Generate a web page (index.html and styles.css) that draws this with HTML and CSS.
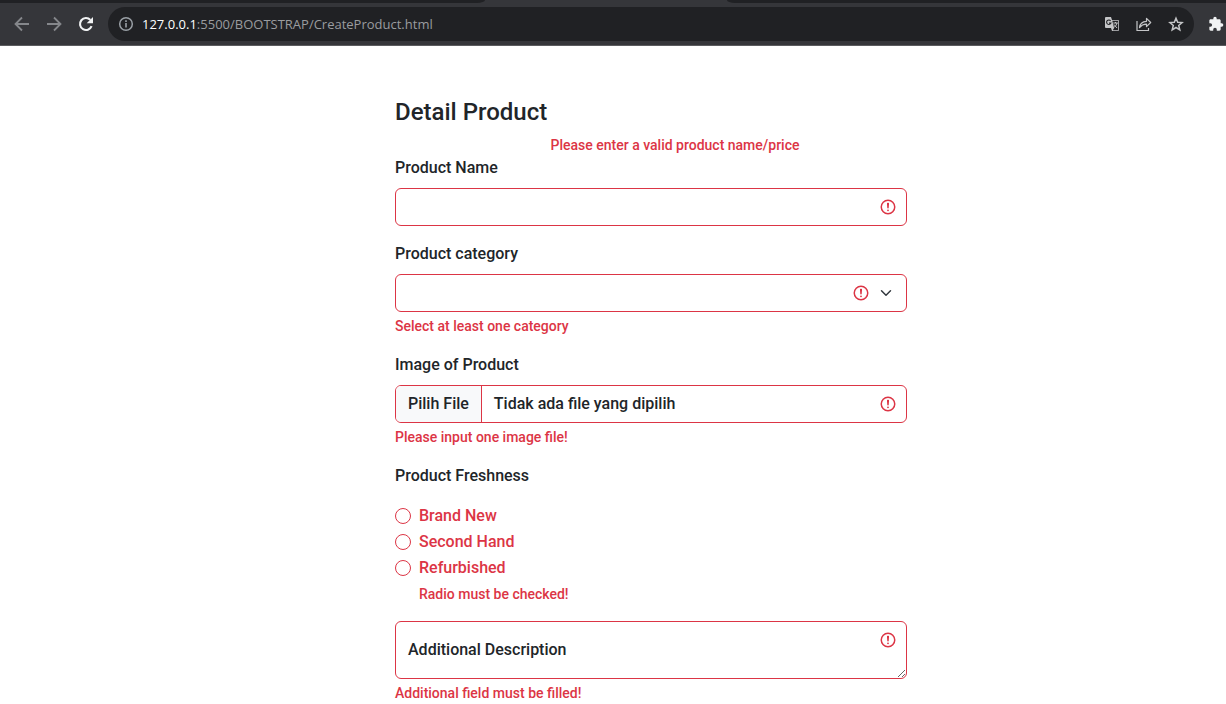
FILE: index.html
```html
<!DOCTYPE html>
<html lang="en">
<head>
<meta charset="utf-8">
<title>Detail Product</title>
<link rel="stylesheet" href="styles.css">
</head>
<body>
<header class="browser">
  <div class="tabstrip"><span class="tabs-left"></span><span class="tab-active"></span><span class="tabs-right"></span></div>
  <nav class="toolbar">
    <button class="tool dim" type="button" aria-label="Back"><svg viewBox="0 0 16 16"><path d="M15 8H2M8 1.5 1.5 8 8 14.5" fill="none" stroke="currentColor" stroke-width="1.8"/></svg></button>
    <button class="tool dim" type="button" aria-label="Forward"><svg viewBox="0 0 16 16"><path d="M1 8h13M8 1.5 14.5 8 8 14.5" fill="none" stroke="currentColor" stroke-width="1.8"/></svg></button>
    <button class="tool" type="button" aria-label="Reload"><svg viewBox="0 0 16 16"><path d="M13.600 10.200A6 6 0 1 1 12.400 3.900" fill="none" stroke="currentColor" stroke-width="2.100"/><path d="M15 1v6.300H8.700z" fill="currentColor"/></svg></button>
    <div class="address">
      <svg class="info" viewBox="0 0 16 16"><circle cx="8" cy="8" r="6.300" fill="none" stroke="currentColor" stroke-width="1.500"/><path d="M8 7v4.500M8 4.300v1.600" stroke="currentColor" stroke-width="1.600"/></svg>
      <span class="url"><span class="host">127.0.0.1</span>:5500/BOOTSTRAP/CreateProduct.html</span>
      <button class="tool pale" type="button" aria-label="Translate"><svg viewBox="0 0 16 16"><path d="M2 1h5l1 3h6q1 0 1 1v9q0 1-1 1H8l-1-3H2q-1 0-1-1V2q0-1 1-1z" fill="currentColor"/><path d="M8.300 4.800H14.200v9.400H8.800l1.300-2.200z" fill="#202124"/><path d="M6.600 4.900A2.200 2.200 0 1 0 6.900 7H5" fill="none" stroke="#202124" stroke-width="1.100"/><path d="M9.300 7h4.500M11.500 6v1M13 7q-.5 2.500-3 4.500M10 8.500l3 3.500" fill="none" stroke="currentColor" stroke-width="1"/></svg></button>
      <button class="tool pale" type="button" aria-label="Share"><svg viewBox="0 0 16 16"><path d="M1 5v9.500h11.500V12" fill="none" stroke="currentColor" stroke-width="1.200"/><path d="M3.500 11.500Q4 5.800 10.500 5.300V2.300l4.200 4.200-4.200 4.200V8.200Q6.500 8 3.500 11.500z" fill="none" stroke="currentColor" stroke-width="1.200" stroke-linejoin="round"/></svg></button>
      <button class="tool pale" type="button" aria-label="Bookmark"><svg viewBox="0 0 16 16"><path d="m8 2.200 1.700 4 4.400.4-3.400 2.900 1.100 4.300L8 11.500l-3.800 2.300 1.100-4.300-3.400-2.900 4.400-.4z" fill="none" stroke="currentColor" stroke-width="1.500"/></svg></button>
    </div>
    <button class="tool extensions" type="button" aria-label="Extensions"><svg viewBox="0 0 24 24"><path d="M20.500 11H19V7c0-1.100-.9-2-2-2h-4V3.500a2.500 2.500 0 0 0-5 0V5H4c-1.100 0-2 .9-2 2v3.800h1.500a2.700 2.700 0 0 1 0 5.400H2V20c0 1.100.9 2 2 2h3.800v-1.500a2.700 2.700 0 0 1 5.400 0V22H17c1.100 0 2-.9 2-2v-4h1.500a2.500 2.500 0 0 0 0-5z" fill="currentColor"/></svg></button>
  </nav>
</header>
<main class="page">
  <form class="product-form" novalidate>
    <h1 class="title">Detail Product</h1>
    <p class="feedback form-error">Please enter a valid product name/price</p>
    <div class="field">
      <label class="label" for="name">Product Name</label>
      <input class="control invalid" id="name" type="text">
    </div>
    <div class="field">
      <label class="label" for="category">Product category</label>
      <select class="control invalid select" id="category"><option value=""></option><option>Food</option><option>Other</option></select>
      <p class="feedback">Select at least one category</p>
    </div>
    <div class="field">
      <label class="label" for="image">Image of Product</label>
      <div class="control invalid file">
        <input class="file-input" id="image" type="file">
        <label class="file-button" for="image">Pilih File</label>
        <span class="file-name">Tidak ada file yang dipilih</span>
      </div>
      <p class="feedback">Please input one image file!</p>
    </div>
    <fieldset class="field group">
      <legend class="label">Product Freshness</legend>
      <div class="choices">
        <label class="choice"><input class="radio" type="radio" name="freshness">Brand New</label>
        <label class="choice"><input class="radio" type="radio" name="freshness">Second Hand</label>
        <label class="choice"><input class="radio" type="radio" name="freshness">Refurbished</label>
      </div>
      <p class="feedback indented">Radio must be checked!</p>
    </fieldset>
    <div class="field">
      <div class="floating">
        <textarea class="control invalid textarea" id="description"></textarea>
        <label class="floating-label" for="description">Additional Description</label>
      </div>
      <p class="feedback">Additional field must be filled!</p>
    </div>
  </form>
</main>
</body>
</html>
```
FILE: styles.css
```css
* { box-sizing: border-box; }
body {
  margin: 0;
  background: #fff;
  color: #212529;
  font: 500 16px/24px Roboto, sans-serif;
}
button, input, select, textarea { font: inherit; color: inherit; }
p, h1 { margin: 0; }

.browser { background: #35363a; border-bottom: 1px solid #5b5c5f; }
.tabstrip { display: flex; height: 3px; }
.tabs-left, .tabs-right { background: #202124; }
.tabs-left { flex: 485; border-bottom-right-radius: 8px 3px; }
.tab-active { flex: 242; }
.tabs-right { flex: 499; border-bottom-left-radius: 8px 3px; }
.toolbar {
  display: flex;
  align-items: center;
  gap: 16px;
  height: 42px;
  padding-left: 14px;
  overflow: hidden;
}
.tool {
  flex: none;
  display: flex;
  width: 16px;
  height: 16px;
  padding: 0;
  border: 0;
  background: none;
  color: #f1f3f4;
}
.tool svg { width: 100%; height: 100%; }
.dim { color: #85878b; }
.pale { color: #c4c5c7; }
.extensions { margin: 0 2px 0 -2px; }
.address {
  flex: 1;
  display: flex;
  align-items: center;
  gap: 16px;
  height: 34px;
  margin-left: -2px;
  padding: 0 10px;
  border-radius: 17px;
  background: #202124;
}
.info { flex: none; width: 16px; height: 16px; color: #9aa0a6; }
.url {
  flex: 1;
  margin-left: -8px;
  color: #9a9c9f;
  font: 400 13px/20px "Open Sans", sans-serif;
  white-space: nowrap;
}
.host { color: #fff; }

.page { display: flex; justify-content: center; padding: 52px 0 0 76px; }
.product-form { width: 512px; }
.title { margin-bottom: 8px; font-size: 24px; line-height: 29px; font-weight: 500; }
.field { margin: 0 0 16px; }
.field:last-child { margin-bottom: 0; }
.label { display: block; margin-bottom: 8px; padding: 0; }
.feedback { margin-top: 4px; color: #dc3545; font-size: 14px; line-height: 21px; }
.form-error { margin-top: 0; padding-left: 48px; text-align: center; }

.control {
  display: block;
  width: 100%;
  height: 38px;
  padding: 6px 12px;
  border: 1px solid #dc3545;
  border-radius: 6px;
  background-color: #fff;
  outline: 0;
}
.invalid {
  background-image: url("data:image/svg+xml,%3Csvg xmlns='http://www.w3.org/2000/svg' viewBox='0 0 12 12' fill='none' stroke='%23dc3545'%3E%3Ccircle cx='6' cy='6' r='4.5'/%3E%3Cpath stroke-linejoin='round' d='M5.8 3.6h.4L6 6.5z'/%3E%3Ccircle cx='6' cy='8.2' r='.6' fill='%23dc3545' stroke='none'/%3E%3C/svg%3E");
  background-repeat: no-repeat;
  background-position: right 9px center;
  background-size: 18px 18px;
}
.select {
  appearance: none;
  background-image: url("data:image/svg+xml,%3Csvg xmlns='http://www.w3.org/2000/svg' viewBox='0 0 16 16'%3E%3Cpath fill='none' stroke='%23343a40' stroke-linecap='round' stroke-linejoin='round' stroke-width='2' d='m2 5 6 6 6-6'/%3E%3C/svg%3E"), url("data:image/svg+xml,%3Csvg xmlns='http://www.w3.org/2000/svg' viewBox='0 0 12 12' fill='none' stroke='%23dc3545'%3E%3Ccircle cx='6' cy='6' r='4.5'/%3E%3Cpath stroke-linejoin='round' d='M5.8 3.6h.4L6 6.5z'/%3E%3Ccircle cx='6' cy='8.2' r='.6' fill='%23dc3545' stroke='none'/%3E%3C/svg%3E");
  background-position: right 12px center, right 36px center;
  background-size: 16px 12px, 18px 18px;
}
.file { position: relative; display: flex; padding: 0; overflow: hidden; }
.file-input { position: absolute; inset: 0; width: 100%; opacity: 0; }
.file-button { padding: 6px 12px; background: #f8f9fa; }
.file-name { padding: 6px 12px; border-left: 1px solid #dc3545; }

.group { min-width: 0; padding: 0; border: 0; }
.group .label { margin-bottom: 16px; }
.choices { display: grid; gap: 2px; }
.choice { display: flex; align-items: center; gap: 8px; color: #dc3545; }
.radio {
  appearance: none;
  width: 16px;
  height: 16px;
  margin: 0;
  border: 1px solid #dc3545;
  border-radius: 50%;
  background: #fff;
}
.radio:checked { background: #dc3545; box-shadow: inset 0 0 0 4px #fff; }
.indented { padding-left: 24px; }

.floating { position: relative; }
.textarea {
  height: 58px;
  padding: 16px 12px;
  background-position: right 9px top 9px;
  resize: vertical;
}
.floating-label { position: absolute; top: 17px; left: 13px; pointer-events: none; }
.textarea:focus + .floating-label { opacity: 0; }
```
